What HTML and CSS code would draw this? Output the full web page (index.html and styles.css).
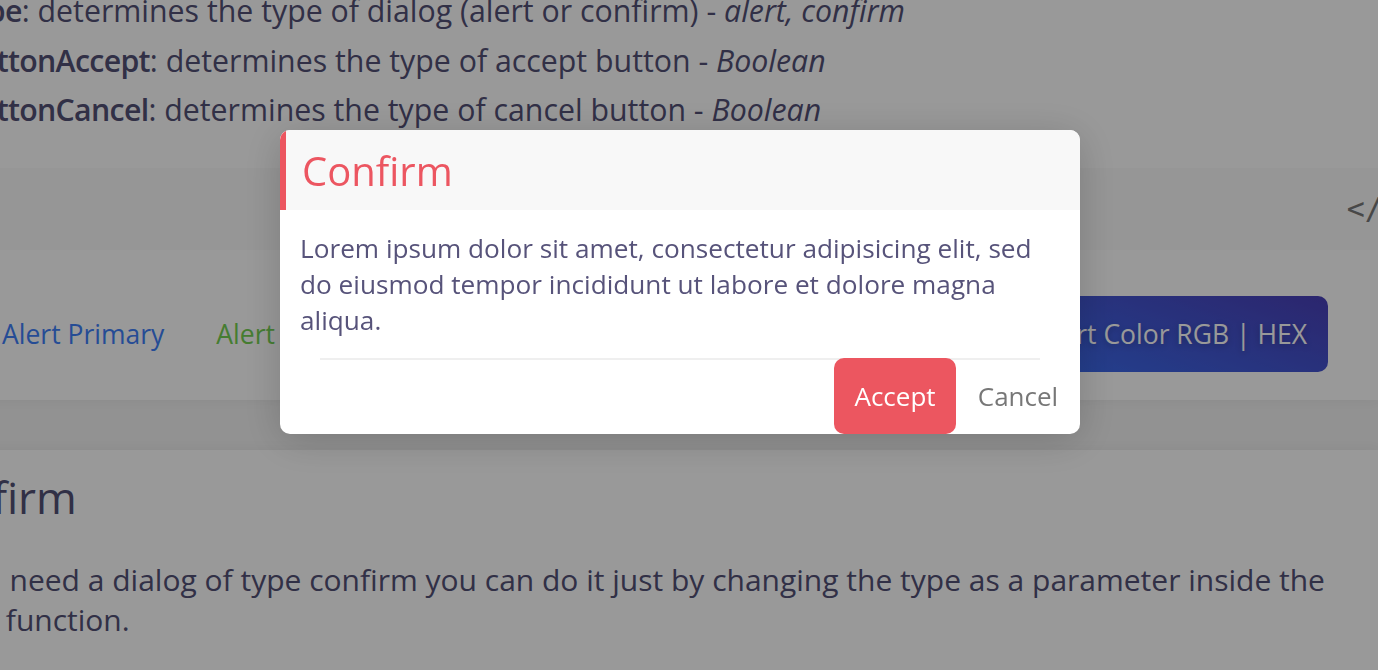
FILE: index.html
```html
<!DOCTYPE html>
<html lang="en">
<head>
<meta charset="utf-8">
<title>Dialog – Confirm</title>
<link rel="stylesheet" href="styles.css">
</head>
<body>
<div class="page">
  <section class="card card-params">
    <ul class="params">
      <li><b>type</b>: determines the type of dialog (alert or confirm) - <i>alert, confirm</i></li>
      <li><b>buttonAccept</b>: determines the type of accept button - <i>Boolean</i></li>
      <li><b>buttonCancel</b>: determines the type of cancel button - <i>Boolean</i></li>
    </ul>
    <div class="code-bar"><span class="code-icon">&lt;/&gt;</span></div>
    <div class="demo">
      <div class="demo-left">
        <button class="btn-text primary">Alert Primary</button>
        <button class="btn-text success">Alert Success</button>
        <button class="btn-text danger">Alert Danger</button>
      </div>
      <button class="btn-gradient">Alert Color RGB | HEX</button>
    </div>
  </section>
  <section class="card card-confirm">
    <h2 class="section-title">Confirm</h2>
    <p class="section-text">If you need a dialog of type confirm you can do it just by changing the type as a parameter inside the<br>show function.</p>
  </section>
</div>

<div class="overlay">
  <div class="dialog">
    <header class="dialog-header">
      <h3 class="dialog-title">Confirm</h3>
    </header>
    <div class="dialog-body">
      <p>Lorem ipsum dolor sit amet, consectetur adipisicing elit, sed do eiusmod tempor incididunt ut labore et dolore magna aliqua.</p>
    </div>
    <hr class="dialog-divider">
    <footer class="dialog-footer">
      <button class="dialog-btn accept">Accept</button>
      <button class="dialog-btn cancel">Cancel</button>
    </footer>
  </div>
</div>
</body>
</html>
```

FILE: styles.css
```css
* { box-sizing: border-box; }

html, body {
  margin: 0;
  padding: 0;
  height: 100%;
  overflow: hidden;
}

body {
  background: #f3f3f3;
  font-family: "Open Sans", "Noto Sans", sans-serif;
  color: #535076;
}

.page {
  margin-left: -64px;
  margin-right: 0;
}

.card {
  background: #ffffff;
  box-shadow: 0 0 12px rgba(0, 0, 0, 0.05);
}

.card-params {
  margin-top: -14px;
}

.params {
  list-style: none;
  margin: 0;
  padding: 0 0 33px 24px;
  font-size: 30.3px;
  line-height: 49.5px;
}

.params b { font-weight: 600; letter-spacing: -0.7px; }
.params i { font-style: italic; }

.code-bar {
  height: 82px;
  background: #fafafa;
  display: flex;
  align-items: center;
  justify-content: flex-end;
  overflow: hidden;
}

.code-icon {
  font-family: "DejaVu Sans Mono", monospace;
  font-size: 30px;
  color: #787878;
  margin-right: -23px;
}

.demo {
  height: 150px;
  display: flex;
  align-items: flex-start;
  justify-content: space-between;
  padding: 46px 50px 0 40px;
}

.demo-left {
  display: flex;
}

.btn-text,
.btn-gradient {
  height: 76px;
  padding: 0 26px;
  border: 0;
  border-radius: 10px;
  background: transparent;
  font-family: "Open Sans", sans-serif;
  font-size: 26.5px;
  cursor: pointer;
}

.btn-text.primary { color: #3f7ff8; }
.btn-text.success { color: #74d053; }
.btn-text.danger { color: #ec5660; }

.btn-gradient {
  padding: 0 21px;
  color: #ffffff;
  background: linear-gradient(20deg, #3a6ef0 0%, #4a40b8 100%);
  text-shadow: 0 2px 6px rgba(0, 0, 0, 0.25);
}

.card-confirm {
  margin-top: 50px;
  padding: 17px 50px 60px 0;
}

.section-title {
  margin: 0 0 0 -25px;
  font-size: 44px;
  font-weight: 400;
  line-height: 60px;
}

.section-text {
  margin: 33px 0 0 -12px;
  font-size: 30px;
  line-height: 40px;
}

/* overlay + dialog */
.overlay {
  position: fixed;
  inset: 0;
  background: rgba(0, 0, 0, 0.4);
  display: flex;
  justify-content: center;
  align-items: flex-start;
  padding: 130px 18px 0 0;
}

.dialog {
  width: 800px;
  background: #ffffff;
  border-radius: 10px;
  overflow: hidden;
  box-shadow: 0 6px 40px rgba(0, 0, 0, 0.18);
}

.dialog-header {
  height: 80px;
  background: #f8f8f8;
  border-left: 6px solid #ec5660;
  display: flex;
  align-items: center;
  padding-left: 16px;
}

.dialog-title {
  margin: 0;
  font-family: "Open Sans", sans-serif;
  font-weight: 400;
  font-size: 40px;
  color: #ec5661;
}

.dialog-body {
  padding: 20px 40px 0 20px;
}

.dialog-body p {
  margin: 0;
  font-size: 26.2px;
  line-height: 36px;
  color: #57537a;
}

.dialog-divider {
  margin: 20px 40px 0 40px;
  border: 0;
  border-top: 2px solid #efefef;
}

.dialog-footer {
  margin-top: -2px;
  display: flex;
  justify-content: flex-end;
}

.dialog-btn {
  height: 76px;
  border: 0;
  border-radius: 10px;
  font-family: "Open Sans", sans-serif;
  font-size: 26px;
  cursor: pointer;
}

.dialog-btn.accept {
  width: 122px;
  background: #ec5660;
  color: #ffffff;
  position: relative;
}

.dialog-btn.cancel {
  width: 124px;
  background: transparent;
  color: #777777;
}
```
